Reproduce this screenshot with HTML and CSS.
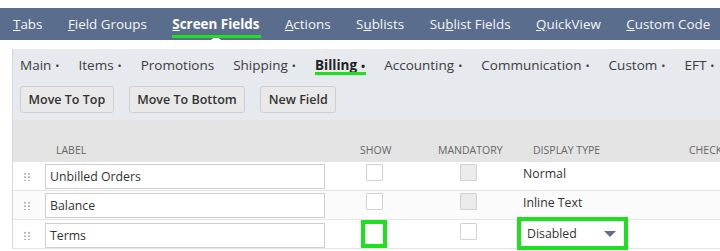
FILE: index.html
```html
<!DOCTYPE html>
<html>
<head>
<meta charset="utf-8">
<link rel="stylesheet" href="styles.css">
</head>
<body>
<nav class="topnav">
  <a class="tab"><u>T</u>abs</a>
  <a class="tab"><u>F</u>ield Groups</a>
  <a class="tab active"><u>S</u>creen Fields</a>
  <a class="tab"><u>A</u>ctions</a>
  <a class="tab">S<u>u</u>blists</a>
  <a class="tab">Su<u>b</u>list Fields</a>
  <a class="tab"><u>Q</u>uickView</a>
  <a class="tab"><u>C</u>ustom Code</a>
</nav>
<section class="panel">
  <div class="subtabs">
    <span class="sub">Main<i>•</i></span>
    <span class="sub">Items<i>•</i></span>
    <span class="sub">Promotions</span>
    <span class="sub">Shipping<i>•</i></span>
    <span class="sub active">Billing<i>•</i></span>
    <span class="sub">Accounting<i>•</i></span>
    <span class="sub">Communication<i>•</i></span>
    <span class="sub">Custom<i>•</i></span>
    <span class="sub">EFT<i>•</i></span>
  </div>
  <div class="buttons">
    <button class="btn">Move To Top</button>
    <button class="btn">Move To Bottom</button>
    <button class="btn">New Field</button>
  </div>
  <div class="table">
    <div class="row head">
      <div class="c-drag"></div>
      <div class="c-label">LABEL</div>
      <div class="c-show">SHOW</div>
      <div class="c-mand">MANDATORY</div>
      <div class="c-type">DISPLAY TYPE</div>
      <div class="c-check">CHECK</div>
    </div>
    <div class="row">
      <div class="c-drag"><span class="handle"></span></div>
      <div class="c-label"><div class="input">Unbilled Orders</div></div>
      <div class="c-show"><span class="cb"></span></div>
      <div class="c-mand"><span class="cb disabled"></span></div>
      <div class="c-type txt">Normal</div>
      <div class="c-check"></div>
    </div>
    <div class="row alt">
      <div class="c-drag"><span class="handle"></span></div>
      <div class="c-label"><div class="input">Balance</div></div>
      <div class="c-show"><span class="cb"></span></div>
      <div class="c-mand"><span class="cb disabled"></span></div>
      <div class="c-type txt">Inline Text</div>
      <div class="c-check"></div>
    </div>
    <div class="row">
      <div class="c-drag"><span class="handle"></span></div>
      <div class="c-label"><div class="input">Terms</div></div>
      <div class="c-show"><span class="hl-cb"><span class="cb inner"></span></span></div>
      <div class="c-mand"><span class="cb"></span></div>
      <div class="c-type"><div class="hl-select"><span>Disabled</span><span class="caret"></span></div></div>
      <div class="c-check"></div>
    </div>
  </div>
</section>
</body>
</html>
```
FILE: styles.css
```css
* { box-sizing: border-box; }
body {
  margin: 0;
  padding-top: 8px;
  background: #fff;
  font-family: "Open Sans", "DejaVu Sans", sans-serif;
  color: #333;
  width: 720px;
  height: 251px;
  overflow: hidden;
}
.topnav {
  height: 32px;
  background: #5a6d8c;
  display: flex;
  align-items: center;
  gap: 25.5px;
  padding-left: 13px;
  white-space: nowrap;
}
.tab {
  position: relative;
  color: #f4f6f8;
  font-size: 13.4px;
  line-height: 32px;
}
.tab.active { font-weight: 700; color: #fff; }
.tab.active::after {
  content: "";
  position: absolute;
  left: 0; right: -2px;
  bottom: 2px;
  height: 3px;
  background: #1ee01e;
}
.tab.active::before {
  content: "";
  position: absolute;
  left: 50%;
  bottom: 0;
  margin-left: -5px;
  border: 5px solid transparent;
  border-bottom: 4px solid #fff;
  border-top: 0;
}
.panel {
  margin: 9px 0 0 12px;
  background: #e6e9ee;
  border-left: 1px solid #d4d7dc;
}
.subtabs {
  height: 31px;
  display: flex;
  align-items: center;
  gap: 19px;
  padding-left: 7px;
  font-size: 13.5px;
  color: #3c3c3c;
  white-space: nowrap;
}
.sub { position: relative; }
.sub i { font-style: normal; font-size: 11px; margin-left: 4px; }
.sub.active { font-weight: 700; color: #222; }
.sub.active::after {
  content: "";
  position: absolute;
  left: 0; right: -1px;
  bottom: -1px;
  height: 3px;
  background: #1ee01e;
}
.buttons {
  display: flex;
  gap: 15px;
  padding: 6px 0 7px 7px;
}
.btn {
  height: 27px;
  padding: 0 7.5px;
  font-family: "Open Sans", "DejaVu Sans", sans-serif;
  font-size: 12.5px;
  font-weight: 600;
  color: #333;
  background: #e9e9e9;
  border: 1px solid #cfcfcf;
  border-radius: 3px;
}
.table { background: #fff; }
.row {
  display: grid;
  grid-template-columns: 27px 320px 78px 85px 166px 1fr;
  height: 29px;
  align-items: center;
  border-bottom: 1px solid #e4e4e4;
  font-size: 12.3px;
  color: #333;
  white-space: nowrap;
}
.row.alt { background: #fbfbfb; }
.row.head {
  height: 42px;
  background: #e4e4e4;
  font-size: 10.5px;
  color: #666;
  align-items: end;
  padding-bottom: 5px;
  border-bottom: 0;
}
.head .c-label { padding-left: 16px; }
.head .c-type { padding-left: 10px; }
.c-check { overflow: hidden; }
.txt { margin-top: -5px; }
.handle {
  display: block;
  width: 6px;
  height: 9px;
  margin-left: 11px;
  background-image: radial-gradient(circle, #b5b5b5 1px, transparent 1.2px);
  background-size: 4px 3.5px;
  background-position: -1px 0;
}
.input {
  margin-left: 5px;
  width: 280px;
  height: 25px;
  line-height: 23px;
  padding-left: 4px;
  border: 1px solid #cfcfcf;
  background: #fff;
}
.cb {
  display: block;
  width: 17px;
  height: 17px;
  border: 1px solid #d2d2d2;
  background: #fff;
  border-radius: 1px;
}
.c-show > .cb { margin-left: 6px; margin-top: -8px; }
.c-mand > .cb { margin-left: 22px; margin-top: -8px; }
.cb.disabled { background: #ebebeb; }
.hl-cb {
  display: block;
  width: 26px;
  height: 28px;
  margin-left: 1px;
  margin-top: -2px;
  border: 4px solid #1ee01e;
  background: #fff;
}
.cb.inner { border-color: #fff; width: 18px; height: 20px; }
.hl-select {
  display: flex;
  align-items: center;
  justify-content: space-between;
  margin-left: -6px;
  width: 111px;
  height: 33px;
  margin-top: -3px;
  border: 4px solid #1ee01e;
  background: #fff;
  padding: 0 8px 0 6px;
}
.caret {
  width: 0; height: 0;
  border-left: 6px solid transparent;
  border-right: 6px solid transparent;
  border-top: 6px solid #5c6f8e;
}
```
